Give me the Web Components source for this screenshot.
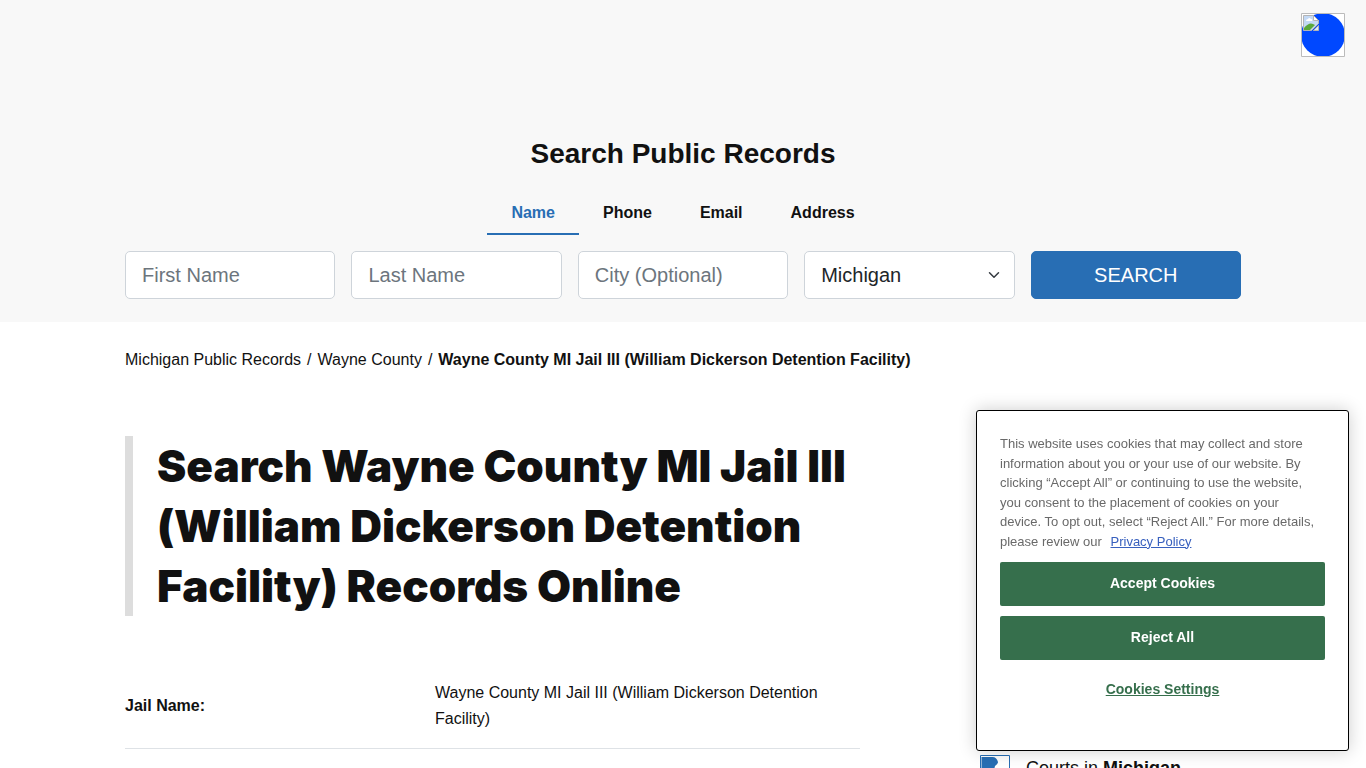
<!DOCTYPE html>
<html lang="en">
<head>
<meta charset="utf-8">
<meta name="viewport" content="width=device-width, initial-scale=1">
<title>Wayne County MI Jail III (William Dickerson Detention Facility)</title>
<style>
    html {
        scrollbar-width: none;
    }
    body {
        margin: 0;
        background: white;
        color: #111;
        font: 16px/26px "Liberation Sans", Arial, sans-serif;
    }
</style>
</head>
<body>
<records-page>
    <search-header slot="header"></search-header>
    <bread-crumbs slot="crumbs" current="Wayne County MI Jail III (William Dickerson Detention Facility)">
        <a href="#michigan">Michigan Public Records</a>
        <a href="#wayne">Wayne County</a>
    </bread-crumbs>
    <page-title>Search Wayne County MI Jail III (William Dickerson Detention Facility) Records Online</page-title>
    <facility-details></facility-details>
    <side-link slot="aside" href="#courts">Courts in <b>Michigan</b></side-link>
</records-page>
<user-badge></user-badge>
<cookie-banner></cookie-banner>

<script>
class RecordsPage extends HTMLElement {
    constructor() {
        super();
        this.attachShadow({ mode: 'open' }).innerHTML = `
            <style>
                :host {
                    display: block;
                }
                .container {
                    max-width: 1116px;
                    margin: 0 auto;
                    padding: 25px 12px;
                }
                .columns {
                    display: grid;
                    grid-template-columns: minmax(0, 735fr) minmax(0, 261fr);
                    column-gap: 120px;
                    margin-top: 63px;
                }
                aside {
                    padding-top: 319px;
                }
                @media (max-width: 768px) {
                    .columns {
                        display: block;
                    }
                    aside {
                        padding-top: 24px;
                    }
                }
            </style>
            <slot name="header"></slot>
            <div class="container">
                <slot name="crumbs"></slot>
                <div class="columns">
                    <main><slot></slot></main>
                    <aside><slot name="aside"></slot></aside>
                </div>
            </div>
        `;
    }
}

class SearchHeader extends HTMLElement {
    constructor() {
        super();
        const tabs = ['Name', 'Phone', 'Email', 'Address'];

        this.attachShadow({ mode: 'open' }).innerHTML = `
            <style>
                :host {
                    display: block;
                    padding: 136px 12px 23px;
                    background: #f8f8f8;
                }
                h2 {
                    margin: 0 0 20px;
                    font-size: 28px;
                    line-height: 35px;
                    text-align: center;
                }
                nav {
                    display: flex;
                    justify-content: center;
                    margin-bottom: 16px;
                }
                nav button {
                    padding: 9px 24px 7px;
                    border: 0;
                    border-bottom: 2px solid transparent;
                    background: none;
                    color: inherit;
                    font: inherit;
                    font-weight: bold;
                }
                nav button[aria-selected="true"] {
                    border-color: #286eb4;
                    color: #286eb4;
                }
                form {
                    display: grid;
                    grid-template-columns: repeat(5, minmax(0, 1fr));
                    gap: 16px;
                    max-width: 1116px;
                    margin: 0 auto;
                }
                input, select, .search {
                    box-sizing: border-box;
                    width: 100%;
                    height: 48px;
                    padding: 8px 16px;
                    border: 1px solid #ced4da;
                    border-radius: 5px;
                    background: white;
                    color: #212529;
                    font: 20px/30px "Liberation Sans", Arial, sans-serif;
                }
                input::placeholder {
                    color: #6c757d;
                    opacity: 1;
                }
                .select {
                    display: grid;
                    align-items: center;
                }
                .select > * {
                    grid-area: 1 / 1;
                }
                select {
                    appearance: none;
                }
                .select svg {
                    justify-self: end;
                    margin-right: 13px;
                    pointer-events: none;
                }
                .search {
                    border-color: #286eb4;
                    background: #286eb4;
                    color: white;
                }
                @media (max-width: 768px) {
                    form {
                        grid-template-columns: 1fr;
                    }
                }
            </style>
            <h2>Search Public Records</h2>
            <nav role="tablist">
                ${tabs.map((tab, i) => `<button type="button" role="tab" aria-selected="${i === 0}">${tab}</button>`).join('')}
            </nav>
            <form>
                <input type="text" aria-label="First Name" placeholder="First Name">
                <input type="text" aria-label="Last Name" placeholder="Last Name">
                <input type="text" aria-label="City" placeholder="City (Optional)">
                <div class="select">
                    <select aria-label="State"><option>Michigan</option></select>
                    <svg width="16" height="12" viewBox="0 0 16 16">
                        <path d="M2 5l6 6 6-6" fill="none" stroke="#343a40" stroke-width="2" stroke-linecap="round" stroke-linejoin="round"/>
                    </svg>
                </div>
                <button class="search" type="button">SEARCH</button>
            </form>
        `;
    }
}

class BreadCrumbs extends HTMLElement {
    constructor() {
        super();
        this.attachShadow({ mode: 'open' });
    }

    connectedCallback() {
        this.shadowRoot.innerHTML = `
            <style>
                :host {
                    display: block;
                }
                nav {
                    display: flex;
                    flex-wrap: wrap;
                }
                ::slotted(a) {
                    color: inherit;
                    text-decoration: none;
                }
                .sep {
                    padding: 0 6px;
                }
            </style>
            <nav aria-label="Breadcrumb">
                <slot name="crumb-0"></slot><span class="sep">/</span>
                <slot name="crumb-1"></slot><span class="sep">/</span>
                <b>${this.getAttribute('current')}</b>
            </nav>
        `;
        this.querySelectorAll('a').forEach((link, i) => {
            link.slot = `crumb-${i}`;
        });
    }
}

class PageTitle extends HTMLElement {
    constructor() {
        super();
        this.attachShadow({ mode: 'open' }).innerHTML = `
            <style>
                :host {
                    display: block;
                    margin-bottom: 48px;
                }
                h1 {
                    margin: 0;
                    padding-left: 24px;
                    border-left: 8px solid #ddd;
                    font: 900 44px/60px Inter, sans-serif;
                }
            </style>
            <h1><slot></slot></h1>
        `;
    }
}

class FacilityDetails extends HTMLElement {
    constructor() {
        super();
        this.attachShadow({ mode: 'open' }).innerHTML = `
            <style>
                :host {
                    display: block;
                }
                table {
                    width: 100%;
                    border-collapse: collapse;
                    table-layout: fixed;
                }
                th, td {
                    padding: 16px 0;
                    border-bottom: 1px solid #dee2e6;
                    text-align: left;
                }
                th {
                    width: 310px;
                }
                td {
                    padding-right: 24px;
                }
                @media (max-width: 768px) {
                    th {
                        width: 40%;
                    }
                }
            </style>
            <table>
                <tr>
                    <th scope="row">Jail Name:</th>
                    <td>Wayne County MI Jail III (William Dickerson Detention Facility)</td>
                </tr>
            </table>
        `;
    }
}

class SideLink extends HTMLElement {
    constructor() {
        super();
        this.attachShadow({ mode: 'open' });
    }

    connectedCallback() {
        this.shadowRoot.innerHTML = `
            <style>
                :host {
                    display: block;
                }
                a {
                    display: flex;
                    gap: 16px;
                    color: inherit;
                    font-size: 18px;
                    line-height: 27px;
                    text-decoration: none;
                }
                svg {
                    flex: none;
                }
            </style>
            <a href="${this.getAttribute('href')}">
                <svg width="30" height="30" viewBox="0 0 30 30">
                    <path d="M.5 .5h29v29H.5z" fill="white" stroke="#286eb4"/>
                    <path d="M1.500 2h11q4 0 5.500 5 0 2-3 4l-1 4v13H1.500z" fill="#286eb4"/>
                </svg>
                <span><slot></slot></span>
            </a>
        `;
    }
}

class UserBadge extends HTMLElement {
    constructor() {
        super();
        this.attachShadow({ mode: 'open' }).innerHTML = `
            <style>
                :host {
                    position: absolute;
                    top: 13px;
                    right: 21px;
                }
                button {
                    display: block;
                    padding: 0;
                    border: 0;
                    background: none;
                }
                svg {
                    display: block;
                }
            </style>
            <button type="button" aria-label="Accessibility options">
                <svg width="44" height="44" viewBox="0 0 44 44">
                    <path d="M0 0h44v44H0z" fill="white"/>
                    <circle cx="22" cy="22" r="22" fill="#0048ff"/>
                    <path d="M.5 .5h43v43H.5z" fill="none" stroke="#bbb"/>
                    <path d="M2.500 2.500h10l5 5v3l-7 7h-8z" fill="#c3d9f5" stroke="#b4b4b4"/>
                    <path d="M12.500 2.500v5h5z" fill="white" stroke="#b4b4b4"/>
                    <path d="M3 17v-2q5-6 9-4l2 1-5 5z" fill="#5aa83b"/>
                    <path d="M5 8q0-2 2-2 1-2 3 0 2 0 1 2z" fill="white"/>
                    <path d="M12.500 17.500h5v-5z" fill="#dce8f8" stroke="#b4b4b4"/>
                </svg>
            </button>
        `;
    }
}

class CookieBanner extends HTMLElement {
    constructor() {
        super();
        this.attachShadow({ mode: 'open' }).innerHTML = `
            <style>
                :host {
                    position: fixed;
                    right: 17px;
                    bottom: 17px;
                    box-sizing: border-box;
                    width: 373px;
                    max-width: calc(100% - 34px);
                    padding: 23px 23px 40px;
                    border: 1px solid black;
                    border-radius: 3px;
                    background: white;
                    box-shadow: 0 0 18px rgba(0, 0, 0, .2);
                    font-size: 13px;
                }
                p {
                    margin: 0 0 11px;
                    padding-right: 5px;
                    color: #696969;
                    line-height: 1.5;
                }
                a {
                    margin-left: 5px;
                    color: #3860be;
                }
                .actions {
                    display: flex;
                    flex-direction: column;
                    gap: 10px;
                }
                button {
                    height: 44px;
                    padding: 0 12px 2px;
                    border: 0;
                    border-radius: 2px;
                    background: #366f4c;
                    color: white;
                    font: bold 14px/20px "Liberation Sans", Arial, sans-serif;
                }
                .settings {
                    height: 40px;
                    background: none;
                    color: #366f4c;
                    text-decoration: underline;
                }
            </style>
            <div role="dialog" aria-label="Privacy">
                <p>This website uses cookies that may collect and store information about you or your use of our website. By clicking “Accept All” or continuing to use the website, you consent to the placement of cookies on your device. To opt out, select “Reject All.” For more details, please review our <a href="#privacy">Privacy Policy</a></p>
                <div class="actions">
                    <button type="button">Accept Cookies</button>
                    <button type="button">Reject All</button>
                    <button type="button" class="settings">Cookies Settings</button>
                </div>
            </div>
        `;
    }
}

customElements.define('records-page', RecordsPage);
customElements.define('search-header', SearchHeader);
customElements.define('bread-crumbs', BreadCrumbs);
customElements.define('page-title', PageTitle);
customElements.define('facility-details', FacilityDetails);
customElements.define('side-link', SideLink);
customElements.define('user-badge', UserBadge);
customElements.define('cookie-banner', CookieBanner);
</script>
</body>
</html>
